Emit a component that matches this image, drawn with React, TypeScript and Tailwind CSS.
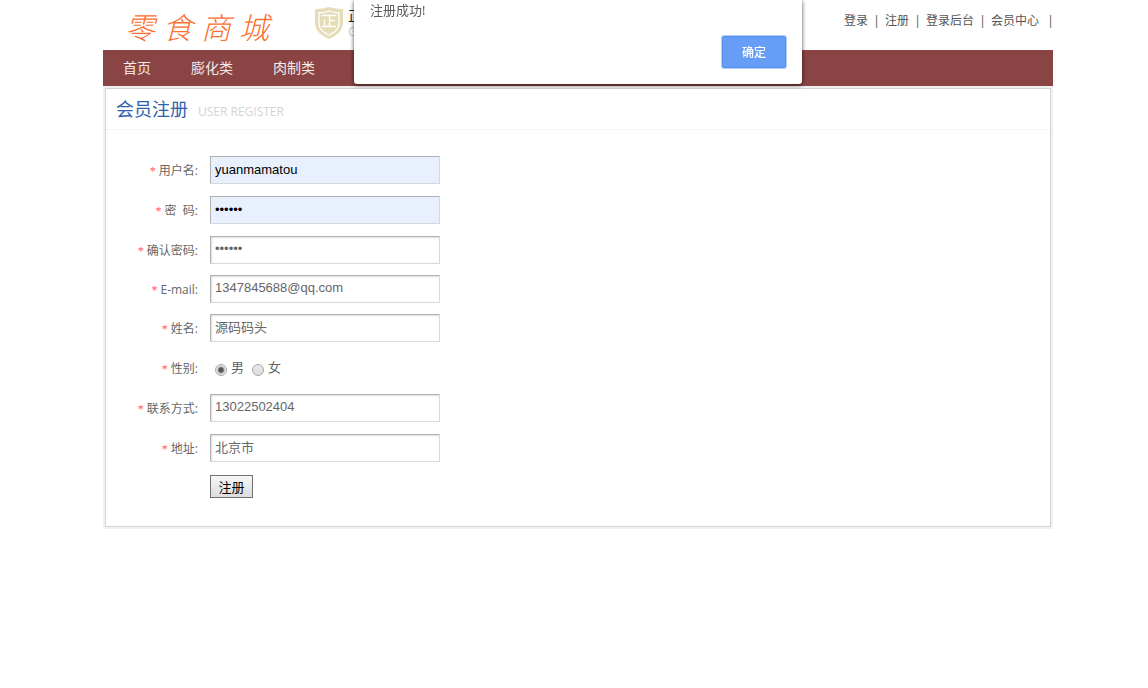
import { useState } from 'react';

interface Field {
  id: string;
  label: string;
  type: string;
  value: string;
  autofilled?: boolean;
  compact?: boolean;
}

const accountFields: Field[] = [
  { id: 'username', label: '用户名:', type: 'text', value: 'yuanmamatou', autofilled: true },
  { id: 'password', label: '密\u00a0\u00a0码:', type: 'password', value: '123456', autofilled: true },
  { id: 'confirm', label: '确认密码:', type: 'password', value: '123456', compact: true },
  { id: 'email', label: 'E-mail:', type: 'text', value: '1347845688@qq.com', compact: true },
  { id: 'name', label: '姓名:', type: 'text', value: '源码码头' },
];

const contactFields: Field[] = [
  { id: 'phone', label: '联系方式:', type: 'text', value: '13022502404' },
  { id: 'address', label: '地址:', type: 'text', value: '北京市' },
];

const userLinks = ['登录', '注册', '登录后台', '会员中心'];
const categories = ['首页', '膨化类', '肉制类'];

function Required() {
  return <span className="mr-[3px] font-['Liberation_Serif',serif] text-[#ff5a5a]">*</span>;
}

function FieldRow({ field }: { field: Field }) {
  return (
    <div className={field.compact ? 'flex h-[39px] items-start' : 'flex h-10 items-start'}>
      <label htmlFor={field.id} className="w-[92px] shrink-0 text-right leading-[30px]">
        <Required />
        {field.label}
      </label>
      <input
        id={field.id}
        type={field.type}
        defaultValue={field.value}
        className={
          field.autofilled
            ? "ml-3 h-7 w-[230px] rounded-[1px] border border-t-[#b0b0b4] border-r-[#d8d8dc] border-b-[#d8d8dc] border-l-[#b0b0b4] bg-[#e8f0fe] px-1 pb-0.5 font-['Liberation_Sans','Noto_Sans_CJK_SC',sans-serif] text-[13px] text-black outline-none"
            : "ml-3 h-7 w-[230px] rounded-[1px] border border-t-[#b0b0b0] border-r-[#d9d9d9] border-b-[#d9d9d9] border-l-[#b0b0b0] bg-white px-1 pb-1 font-['Liberation_Sans','Noto_Sans_CJK_SC',sans-serif] text-[13px] text-[#666] shadow-[inset_1px_1px_2px_#ddd] outline-none"
        }
      />
    </div>
  );
}

function Shield() {
  return (
    <svg width="30" height="34" viewBox="0 0 30 34" aria-hidden="true">
      <path d="M1 3C7 3 11 2 15 1c4 1 8 2 14 2v14c0 8-7 13-14 16C8 30 1 25 1 17Z" fill="#e5dcb8" />
      <path
        d="M5 7c4 0 7-1 10-2 3 1 6 2 10 2v10c0 6-5 10-10 12C10 27 5 23 5 17Z"
        fill="none"
        stroke="#fff"
        strokeWidth="1.3"
      />
      <path d="M8 9.5h14M15.5 9.5V20M15.5 14.5H21M10.5 13.5V20M8 20.5h14" fill="none" stroke="#fff" strokeWidth="1.3" />
    </svg>
  );
}

function Header() {
  return (
    <header>
      <div className="flex h-[50px] items-start">
        <a href="#" className="ml-[22px] flex gap-2 pt-2 text-[30px] leading-10 font-light text-[#fb7032] italic">
          <span>零</span>
          <span>食</span>
          <span>商</span>
          <span>城</span>
        </a>
        <div className="ml-[45px] flex gap-1 pt-[6px]">
          <Shield />
          <div className="w-4 overflow-hidden">
            <p className="text-sm leading-5 text-[#222]">正</p>
            <p className="text-xs leading-3 text-[#ccc]">G</p>
          </div>
        </div>
        <div className="ml-auto flex gap-[7px] pt-[13px] pr-px text-xs leading-4 text-[#555]">
          {userLinks.map((link, i) => (
            <span key={link} className="flex gap-[7px]">
              <a href="#">{link}</a>
              <span className={i === userLinks.length - 1 ? 'ml-[3px] flex w-[3px] justify-center' : 'flex w-[3px] justify-center'}>
                |
              </span>
            </span>
          ))}
        </div>
      </div>
      <nav className="flex h-9 items-center bg-[#8a4443] text-sm text-[#f3eaea]">
        {categories.map((item) => (
          <a key={item} href="#" className="px-5">
            {item}
          </a>
        ))}
      </nav>
    </header>
  );
}

function RegisterForm() {
  const [gender, setGender] = useState('男');

  return (
    <section className="border-2 border-[#f1f1f1]">
      <div className="border border-[#d3d3d3]">
        <div className="flex h-[41px] items-baseline gap-[10px] border-b border-dotted border-[#ececec] pt-[6px] pl-[10px]">
          <h1 className="text-lg leading-7 text-[#2f62ae]">会员注册</h1>
          <span className="text-xs text-[#d4d4d4]">USER REGISTER</span>
        </div>
        <form className="pt-[26px] pb-7 text-xs text-[#666]" onSubmit={(e) => e.preventDefault()}>
          {accountFields.map((field) => (
            <FieldRow key={field.id} field={field} />
          ))}

          {/* Gender */}
          <div className="flex h-10 items-start" role="radiogroup" aria-labelledby="gender">
            <span id="gender" className="w-[92px] shrink-0 text-right leading-[30px]">
              <Required />
              性别:
            </span>
            <div className="ml-[17px] flex gap-2 text-[13px] leading-[26px]">
              {['男', '女'].map((option) => (
                <label key={option} className="flex items-center gap-1">
                  <input
                    type="radio"
                    name="gender"
                    value={option}
                    checked={gender === option}
                    onChange={() => setGender(option)}
                    className="mt-[6px] size-3 appearance-none rounded-full border border-[#a8a8a8] bg-[linear-gradient(#e8e8e8,#dcdcdc)] checked:bg-[radial-gradient(circle,#555_2px,#e4e4e4_4px)]"
                  />
                  {option}
                </label>
              ))}
            </div>
          </div>

          {contactFields.map((field) => (
            <FieldRow key={field.id} field={field} />
          ))}

          <button
            type="submit"
            className="mt-px ml-[104px] block h-[23px] w-[43px] border border-[#707070] bg-linear-to-b from-[#f6f6f6] to-[#dddddd] text-[13px] leading-5 text-black"
          >
            注册
          </button>
        </form>
      </div>
    </section>
  );
}

function AlertDialog({ onClose }: { onClose: () => void }) {
  return (
    <div className="pointer-events-none fixed inset-x-0 top-0 flex justify-center pl-2">
      <div
        role="alertdialog"
        aria-labelledby="alert-message"
        className="pointer-events-auto w-full max-w-[448px] rounded-b-[3px] bg-white px-4 pb-4 shadow-[0_1px_4px_rgba(0,0,0,0.7)]"
      >
        <p id="alert-message" className="text-[13px] leading-5 text-[#5a5a5a]">
          注册成功!
        </p>
        <div className="flex justify-end pt-4">
          <button
            type="button"
            onClick={onClose}
            className="h-8 w-16 rounded-[2px] border border-[#5590f0] bg-[#669df6] pt-0.5 text-xs font-medium text-white ring-1 ring-[#b5d0fb]"
          >
            确定
          </button>
        </div>
      </div>
    </div>
  );
}

export default function App() {
  const [showAlert, setShowAlert] = useState(true);

  return (
    <div className="min-h-screen bg-white pl-2 font-['Open_Sans','Noto_Sans_CJK_SC',sans-serif]">
      <div className="mx-auto max-w-[950px]">
        <Header />
        <RegisterForm />
      </div>
      {showAlert && <AlertDialog onClose={() => setShowAlert(false)} />}
    </div>
  );
}
